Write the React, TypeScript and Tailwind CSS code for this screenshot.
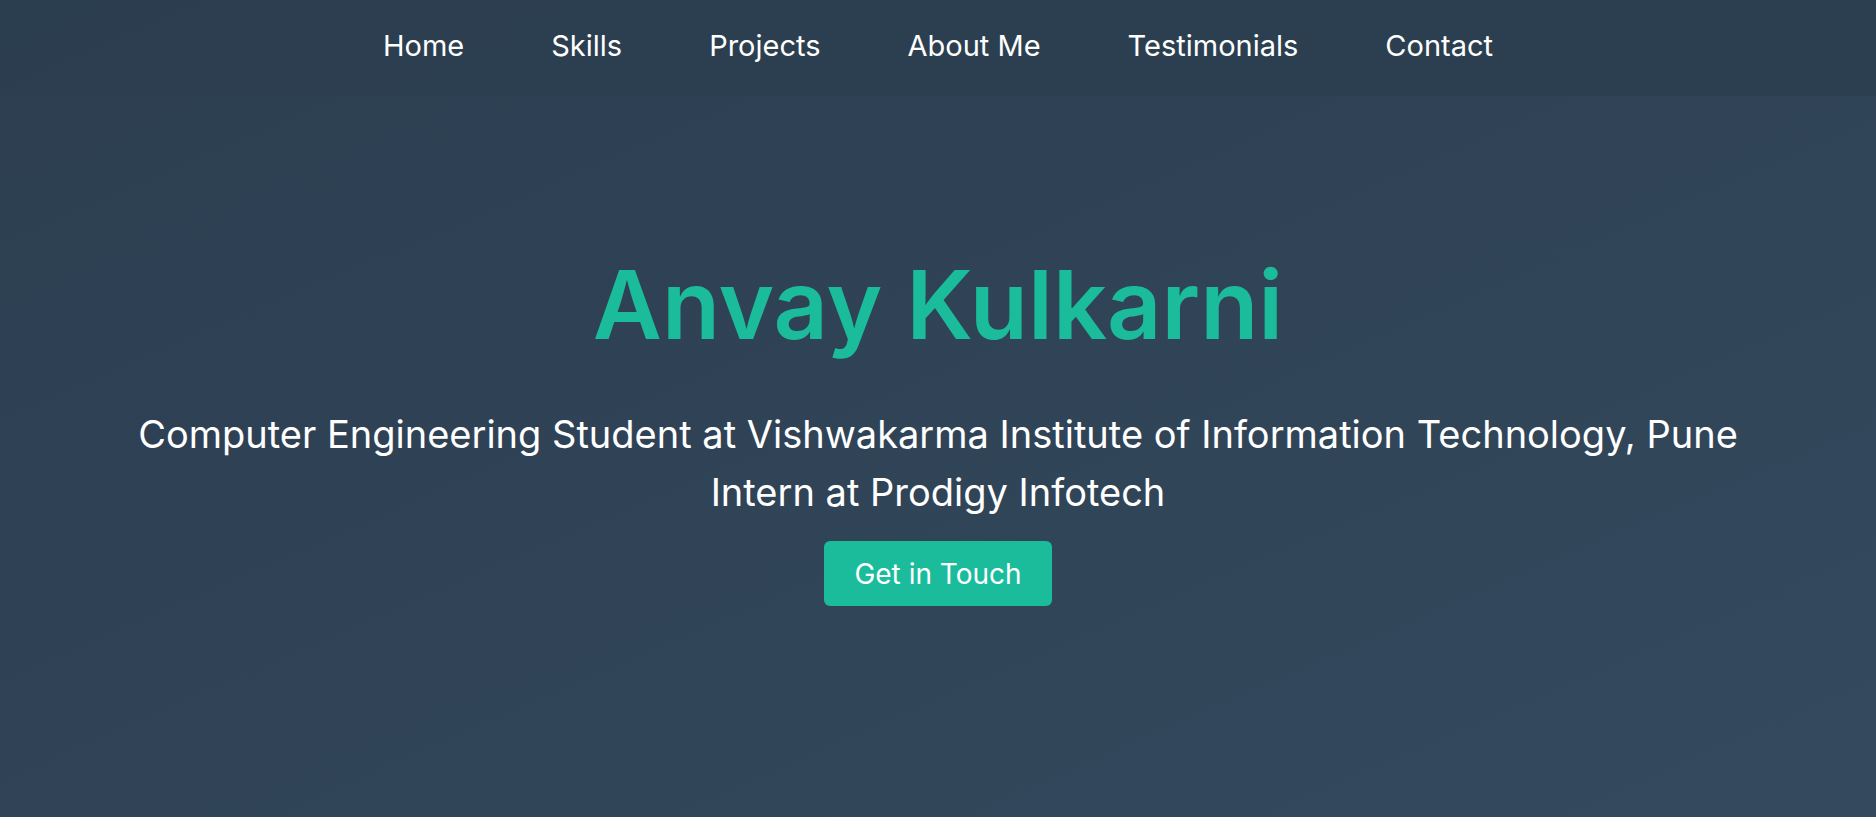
import React from 'react';

const links = ['Home', 'Skills', 'Projects', 'About Me', 'Testimonials', 'Contact'];

const App: React.FC = () => {
  return (
    <div className="min-h-screen w-full bg-gradient-to-br from-[#2c3e50] to-[#34495e] text-white font-['Inter',sans-serif]">
      <nav className="h-[96px] bg-[#2c3e50]/80 flex items-center justify-center">
        <ul className="flex items-center gap-[87px] pb-[4px]">
          {links.map((l) => (
            <li key={l}>
              <a href="#" className="text-[29px] text-white">
                {l}
              </a>
            </li>
          ))}
        </ul>
      </nav>
      <section className="flex flex-col items-center pt-[161px] text-center">
        <h1 className="text-[95px] font-semibold leading-none text-[#1abc9c]">Anvay Kulkarni</h1>
        <p className="mt-[53px] text-[38px] leading-[58px]">
          Computer Engineering Student at Vishwakarma Institute of Information Technology, Pune
        </p>
        <p className="text-[38px] leading-[58px]">Intern at Prodigy Infotech</p>
        <a
          href="#"
          className="mt-[20px] w-[228px] h-[65px] flex items-center justify-center rounded-md bg-[#1abc9c] text-[28px]"
        >
          Get in Touch
        </a>
      </section>
    </div>
  );
};

export default App;
